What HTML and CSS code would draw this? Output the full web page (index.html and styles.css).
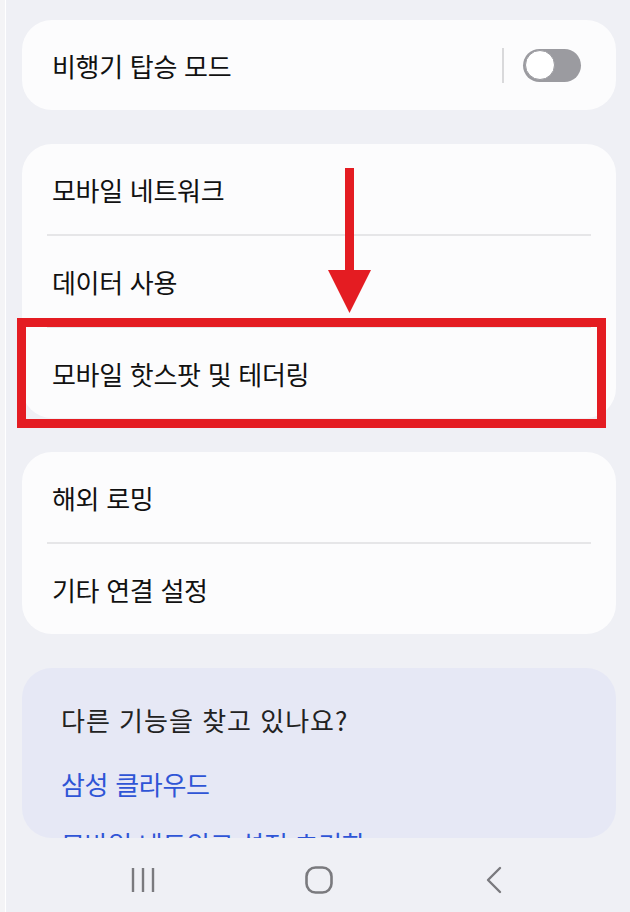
FILE: index.html
```html
<!DOCTYPE html>
<html lang="ko">
<head>
    <meta charset="UTF-8">
    <meta name="viewport" content="width=device-width, initial-scale=1.0">
    <title>연결</title>
    <link rel="stylesheet" href="styles.css">
</head>
<body>
    <div class="screen">
        <div class="scroll">
            <div class="card">
                <div class="row">
                    <span class="label">비행기 탑승 모드</span>
                    <div class="switch-area">
                        <span class="vline"></span>
                        <span class="switch"><span class="knob"></span></span>
                    </div>
                </div>
            </div>

            <div class="card">
                <div class="row"><span class="label">모바일 네트워크</span></div>
                <div class="divider"></div>
                <div class="row"><span class="label">데이터 사용</span></div>
                <div class="divider"></div>
                <div class="row"><span class="label">모바일 핫스팟 및 테더링</span></div>
            </div>

            <div class="card">
                <div class="row"><span class="label">해외 로밍</span></div>
                <div class="divider"></div>
                <div class="row"><span class="label">기타 연결 설정</span></div>
            </div>

            <div class="card card-suggest">
                <p class="suggest-title">다른 기능을 찾고 있나요?</p>
                <a class="suggest-link">삼성 클라우드</a>
                <a class="suggest-link">모바일 네트워크 설정 초기화</a>
            </div>
        </div>

        <nav class="navbar">
            <span class="nav-btn">
                <svg width="26" height="26" viewBox="0 0 26 26">
                    <path d="M2 1v24M12 1v24M22 1v24" stroke="#7a7a7e" stroke-width="2.4" fill="none"/>
                </svg>
            </span>
            <span class="nav-btn">
                <svg width="30" height="28" viewBox="0 0 30 28">
                    <rect x="2.5" y="1.5" width="25" height="25" rx="9" stroke="#7a7a7e" stroke-width="2.6" fill="none"/>
                </svg>
            </span>
            <span class="nav-btn">
                <svg width="18" height="28" viewBox="0 0 18 28">
                    <path d="M15 2L3 14l12 12" stroke="#7a7a7e" stroke-width="2.4" fill="none" stroke-linecap="round" stroke-linejoin="round"/>
                </svg>
            </span>
        </nav>

        <!-- 강조 표시 -->
        <div class="mark-arrow">
            <svg width="46" height="146" viewBox="0 0 46 146">
                <rect x="18" y="0" width="9" height="104" fill="#e41c22"/>
                <polygon points="1,102 44,102 22.5,145" fill="#e41c22"/>
            </svg>
        </div>
        <div class="mark-box"></div>
    </div>
</body>
</html>
```

FILE: styles.css
```css
body {
    margin: 0;
    background: #eff0f5;
    font-family: "Noto Sans CJK KR", "Noto Sans", sans-serif;
}

.screen {
    position: relative;
    width: 630px;
    height: 912px;
    overflow: hidden;
    background: #eff0f5;
}

/* 왼쪽 가장자리 */
.screen::before {
    content: "";
    position: absolute;
    left: 0;
    top: 0;
    bottom: 0;
    width: 5px;
    background: #f4f4f6;
    border-right: 1px solid #ffffff;
}

.scroll {
    height: 838px;
    overflow: hidden;
    padding: 20px 14px 0 22px;
    box-sizing: border-box;
    display: flex;
    flex-direction: column;
    gap: 34px;
}

.card {
    background: #fcfcfd;
    border-radius: 30px;
    flex-shrink: 0;
}

.row {
    height: 90px;
    padding: 0 30px;
    display: flex;
    align-items: center;
    justify-content: space-between;
}

.label {
    font-size: 26px;
    color: #111111;
    letter-spacing: -0.3px;
}

.divider {
    height: 2px;
    margin: 0 25px;
    background: #e6e6e8;
}

.switch-area {
    display: flex;
    align-items: center;
    gap: 19px;
    margin-right: 5px;
}

.vline {
    width: 2px;
    height: 35px;
    background: #d9d9db;
}

.switch {
    width: 58px;
    height: 33px;
    border-radius: 17px;
    background: #9b9ba0;
    display: flex;
    align-items: center;
}

.knob {
    width: 28px;
    height: 28px;
    margin-left: 2px;
    border-radius: 50%;
    background: #ffffff;
    border: 0.5px solid #9b9ba0;
}

.card-suggest {
    background: #e6e8f5;
    padding: 34px 39px 0;
    height: 170px;
    box-sizing: border-box;
    overflow: hidden;
    display: flex;
    flex-direction: column;
    gap: 28px;
}

.suggest-title {
    margin: 0;
    font-size: 26px;
    color: #222222;
    line-height: 36px;
    letter-spacing: 1px;
}

.suggest-link {
    font-size: 26px;
    color: #2f55d6;
    line-height: 36px;
    letter-spacing: -0.3px;
}

.suggest-link + .suggest-link {
    margin-top: -4px;
}

.navbar {
    height: 74px;
    display: grid;
    grid-template-columns: repeat(3, 175px);
    padding-left: 56px;
    align-items: center;
}

.nav-btn {
    display: flex;
    justify-content: center;
    align-items: center;
    margin-top: 10px;
}

.mark-arrow {
    position: absolute;
    left: 327px;
    top: 168px;
    line-height: 0;
}

.mark-box {
    position: absolute;
    left: 17px;
    top: 318px;
    width: 589px;
    height: 110px;
    box-sizing: border-box;
    border: 9px solid #e41c22;
}
```
